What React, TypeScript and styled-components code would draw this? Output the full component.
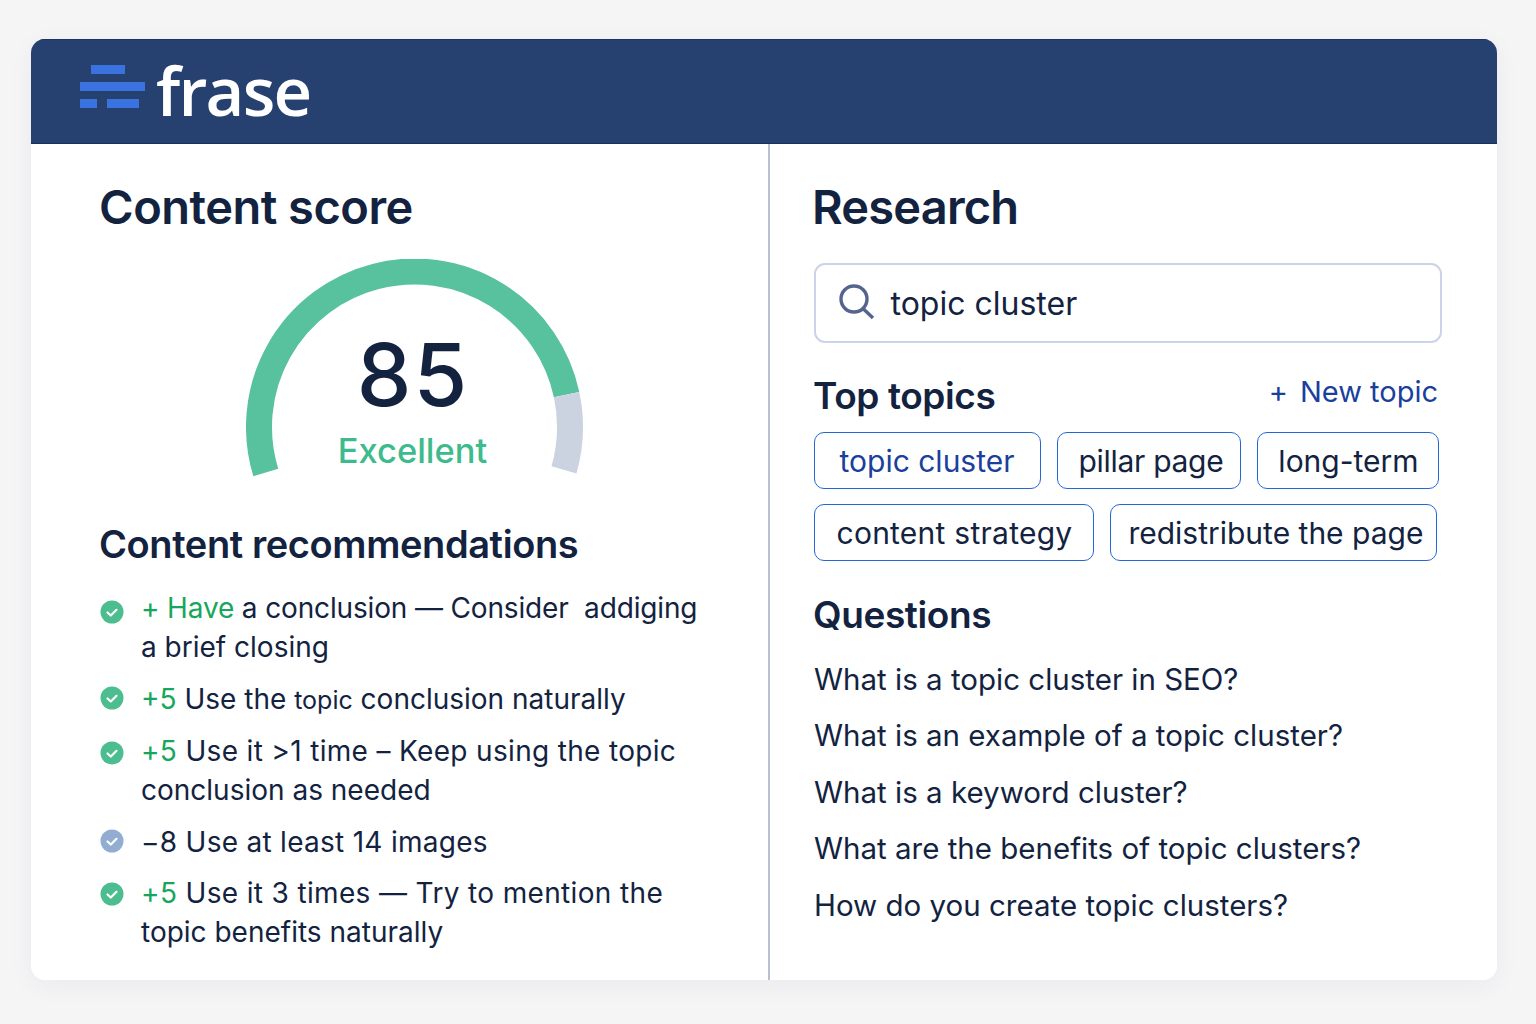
import React from 'react';
import styled, { createGlobalStyle } from 'styled-components';

const GlobalStyle = createGlobalStyle`
  html, body {
    margin: 0;
    padding: 0;
    background: #f5f5f6;
    font-family: Inter, "Liberation Sans", sans-serif;
    color: #13233f;
  }
`;

const polar = (r: number, deg: number) => {
    const a = (deg * Math.PI) / 180;
    return `${(168.5 + r * Math.cos(a)).toFixed(2)} ${(168 - r * Math.sin(a)).toFixed(2)}`;
};

const arc = (from: number, to: number) => `M ${polar(155.5, from)} A 155.5 155.5 0 ${from - to > 180 ? 1 : 0} 1 ${polar(155.5, to)}`;

const Logo = () => (
    <LogoMark width="66" height="44" viewBox="0 0 66 44">
        <rect x="11" y="0" width="34" height="9" fill="#3a72e0" />
        <rect x="0" y="17" width="65" height="9" fill="#3a72e0" />
        <rect x="0" y="34" width="17" height="9" fill="#3a72e0" />
        <rect x="27" y="34" width="32" height="9" fill="#3a72e0" />
    </LogoMark>
);

const Gauge = () => (
    <GaugeBox>
        <svg width="338" height="220" viewBox="0 0 338 220">
            <path d={arc(197, 12)} fill="none" stroke="#57c29d" strokeWidth="26" />
            <path d={arc(12, -16)} fill="none" stroke="#ccd3e0" strokeWidth="26" />
        </svg>
        <Score>85</Score>
        <ScoreLabel>Excellent</ScoreLabel>
    </GaugeBox>
);

const Check = ({ muted, top }: { muted?: boolean; top: number }) => (
    <CheckIcon $top={top} width="24" height="24" viewBox="0 0 24 24">
        <circle cx="12" cy="12" r="11.5" fill={muted ? '#93add2' : '#4bbd8e'} />
        <path d="M7.5 12.5 L10.8 15.5 L16.5 9.8" fill="none" stroke="#fff" strokeWidth="2.2" strokeLinecap="round" strokeLinejoin="round" />
    </CheckIcon>
);

const App: React.FC = () => {
    return (
        <Page>
            <GlobalStyle />
            <Card>
                <Header>
                    <Logo />
                    <Wordmark>frase</Wordmark>
                </Header>
                <Body>
                    <LeftPane>
                        <PaneTitle>Content score</PaneTitle>
                        <Gauge />
                        <SectionTitle>Content recommendations</SectionTitle>
                        <RecList>
                            <Rec>
                                <Check top={10.5} />
                                <RecText>
                                    <Line $track={-0.15}><Gain>+ Have</Gain> a conclusion — Consider&nbsp; addiging</Line>
                                    <Line>a brief closing</Line>
                                </RecText>
                            </Rec>
                            <Rec>
                                <Check top={6.5} />
                                <RecText>
                                    <Line><Gain>+5</Gain> Use the <Small>topic</Small> conclusion naturally</Line>
                                </RecText>
                            </Rec>
                            <Rec>
                                <Check top={8.5} />
                                <RecText>
                                    <Line $track={0.33}><Gain>+5</Gain> Use it &gt;1 time – Keep using the topic</Line>
                                    <Line>conclusion as needed</Line>
                                </RecText>
                            </Rec>
                            <Rec>
                                <Check muted top={6.5} />
                                <RecText>
                                    <Line $track={0.28}>−8 Use at least 14 images</Line>
                                </RecText>
                            </Rec>
                            <Rec>
                                <Check top={7.5} />
                                <RecText>
                                    <Line $track={0.35}><Gain>+5</Gain> Use it 3 times — Try to mention the</Line>
                                    <Line>topic benefits naturally</Line>
                                </RecText>
                            </Rec>
                        </RecList>
                    </LeftPane>
                    <RightPane>
                        <ResearchTitle>Research</ResearchTitle>
                        <SearchBox>
                            <svg width="38" height="38" viewBox="0 0 38 38" fill="none" stroke="#55638f" strokeWidth="3.4">
                                <circle cx="15" cy="15" r="13" />
                                <path d="M24.5 25 L34 34" />
                            </svg>
                            <SearchText>topic cluster</SearchText>
                        </SearchBox>
                        <TopicsHead>
                            <SubTitle>Top topics</SubTitle>
                            <NewTopic><span>+</span>New topic</NewTopic>
                        </TopicsHead>
                        <Chips>
                            <Chip $active $l={24.5} $r={25.5}>topic cluster</Chip>
                            <Chip $l={20.5} $r={16.5} $track={-0.3}>pillar page</Chip>
                            <Chip $l={20.5} $r={19.5}>long-term</Chip>
                            <Chip $l={21.5} $r={20.5} $track={0.25}>content strategy</Chip>
                            <Chip $l={17.5} $r={12.5}>redistribute the page</Chip>
                        </Chips>
                        <SubTitle>Questions</SubTitle>
                        <Questions>
                            <li>What is a topic cluster in SEO?</li>
                            <li>What is an example of a topic cluster?</li>
                            <li>What is a keyword cluster?</li>
                            <li>What are the benefits of topic clusters?</li>
                            <li>How do you create topic clusters?</li>
                        </Questions>
                    </RightPane>
                </Body>
            </Card>
        </Page>
    );
};

export default App;

// Styled Components
const Page = styled.div`
  width: 1536px;
  height: 1024px;
  box-sizing: border-box;
  padding: 39px 39px 44px 31px;
  overflow: hidden;
`;

const Card = styled.div`
  height: 941px;
  display: flex;
  flex-direction: column;
  background: #fff;
  border-radius: 14px;
  overflow: hidden;
  box-shadow: 0 6px 24px rgba(30, 45, 80, 0.05);
`;

const Header = styled.header`
  height: 105px;
  flex: none;
  box-sizing: border-box;
  padding: 0 0 0 49px;
  display: flex;
  align-items: center;
  gap: 10px;
  background: #26416f;
  border-top: 1px solid #1b3463;
  border-bottom: 1px solid #16305c;
`;

const LogoMark = styled.svg`
  flex: none;
  margin-top: -9px;
`;

const Wordmark = styled.div`
  font-family: "Open Sans", sans-serif;
  font-size: 67px;
  font-weight: 600;
  line-height: 70px;
  letter-spacing: -1.8px;
  color: #fff;
  margin-top: -3px;
`;

const Body = styled.div`
  flex: 1;
  display: flex;
`;

const LeftPane = styled.section`
  width: 739px;
  flex: none;
  box-sizing: border-box;
  padding: 34px 0 0 69px;
  border-right: 2px solid #b9c1d0;
`;

const RightPane = styled.section`
  flex: 1;
  box-sizing: border-box;
  padding: 34px 54px 0 44px;
`;

const PaneTitle = styled.h1`
  margin: 0 0 0 -1px;
  font-size: 47px;
  line-height: 58px;
  font-weight: 600;
  letter-spacing: -0.5px;
  color: #13233f;
`;

const ResearchTitle = styled(PaneTitle)`
  margin-left: -2px;
  letter-spacing: -0.8px;
`;

const SectionTitle = styled.h2`
  margin: 0 0 0 -1px;
  font-size: 38px;
  line-height: 44px;
  font-weight: 600;
  letter-spacing: -0.4px;
  color: #13233f;
`;

const SubTitle = styled(SectionTitle)`
  font-size: 37px;
`;

const GaugeBox = styled.div`
  position: relative;
  width: 338px;
  height: 220px;
  margin: 23px 0 43px 146px;
`;

const Score = styled.div`
  position: absolute;
  left: -4px;
  right: 0;
  top: 66px;
  text-align: center;
  font-size: 87px;
  line-height: 100px;
  font-weight: 500;
  color: #13233f;
  letter-spacing: 2px;
`;

const ScoreLabel = styled.div`
  position: absolute;
  left: -5px;
  right: 0;
  top: 170px;
  text-align: center;
  font-size: 34.5px;
  line-height: 44px;
  font-weight: 500;
  color: #3dbb8c;
`;

const RecList = styled.ul`
  list-style: none;
  margin: 23px 0 0;
  padding: 0;
  display: flex;
  flex-direction: column;
  gap: 12.5px;
`;

const Rec = styled.li`
  display: flex;
  align-items: flex-start;
  gap: 17px;
`;

const CheckIcon = styled.svg<{ $top: number }>`
  flex: none;
  margin-top: ${p => p.$top}px;
`;

const RecText = styled.div`
  font-size: 28px;
  line-height: 39px;
  color: #13233f;
`;

const Line = styled.span<{ $track?: number }>`
  display: block;
  white-space: nowrap;
  letter-spacing: ${p => p.$track ?? 0}px;
`;

const Gain = styled.span`
  color: #16a75c;
`;

const Small = styled.span`
  font-size: 25px;
`;

const SearchBox = styled.div`
  margin-top: 27px;
  height: 80px;
  box-sizing: border-box;
  width: 628px;
  display: flex;
  align-items: center;
  gap: 13.5px;
  padding-left: 23px;
  border: 2px solid #c9d4e8;
  border-radius: 11px;
`;

const SearchText = styled.span`
  font-size: 32px;
  color: #13233f;
`;

const TopicsHead = styled.div`
  margin-top: 31px;
  width: 624px;
  display: flex;
  align-items: flex-start;
  justify-content: space-between;
`;

const NewTopic = styled.span`
  font-size: 29px;
  line-height: 36px;
  color: #1a3f9c;

  span {
    margin-right: 12px;
  }
`;

const Chips = styled.div`
  margin: 14px 0 32px;
  display: flex;
  flex-wrap: wrap;
  gap: 15px 16px;
`;

const Chip = styled.div<{ $active?: boolean; $l: number; $r: number; $track?: number }>`
  height: 57px;
  box-sizing: border-box;
  padding: 0 ${p => p.$r}px 0 ${p => p.$l}px;
  display: flex;
  align-items: center;
  border: 1.5px solid #2467d6;
  border-radius: 10px;
  font-size: 30px;
  letter-spacing: ${p => p.$track ?? 0}px;
  color: ${p => (p.$active ? '#1a3f9c' : '#13233f')};
`;

const Questions = styled.ul`
  list-style: none;
  margin: 22px 0 0;
  padding: 0;
  display: flex;
  flex-direction: column;
  gap: 16.4px;
  font-size: 29.5px;
  line-height: 40px;
  color: #13233f;
`;
